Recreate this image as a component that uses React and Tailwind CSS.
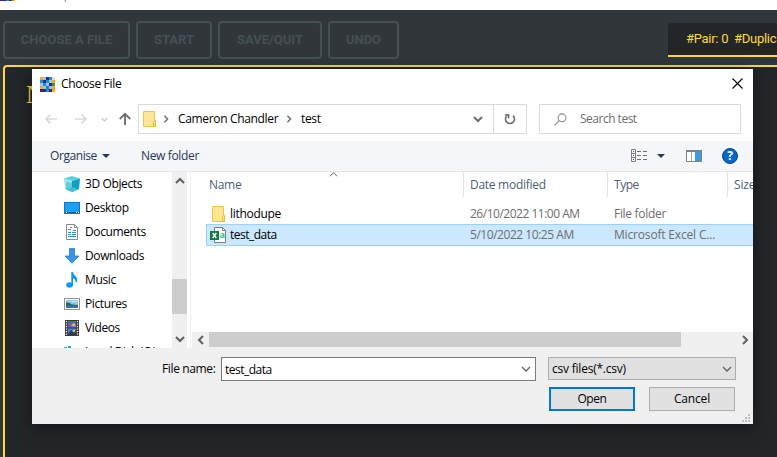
import React from "react";

const UI = "font-['Open_Sans','Noto_Sans',sans-serif]";

const LOGO = [
  "#ffa60a #9cc4e6 #2d2a7c #1d8fd6 #cfe0f0",
  "#1d8fd6 #2d2a7c #1d8fd6 #9cc4e6 #ffa60a",
  "#9cc4e6 #1d8fd6 #9cc4e6 #2d2a7c #1d8fd6",
  "#ffa60a #9cc4e6 #2d6fc0 #9cc4e6 #ffa60a",
  "#2d2a7c #2d2a7c #1d8fd6 #2d2a7c #ffa60a",
];

function Logo({ className }) {
  return (
    <svg className={className} viewBox="0 0 15 15" shapeRendering="crispEdges">
      {LOGO.map((row, y) =>
        row.split(" ").map((c, x) => (
          <rect key={`${x}-${y}`} x={x * 3} y={y * 3} width="3" height="3" fill={c} />
        ))
      )}
    </svg>
  );
}

function Chevron({ dir = "down", size = 10, color = "#606060", width = 1.5 }) {
  const d = { down: "M1 3L5 7L9 3", up: "M1 7L5 3L9 7", left: "M7 1L3 5L7 9", right: "M3 1L7 5L3 9" }[dir];
  return (
    <svg className="block shrink-0" width={size} height={size} viewBox="0 0 10 10" fill="none" stroke={color} strokeWidth={width * (10 / size)}>
      <path d={d} />
    </svg>
  );
}

function Arrow({ dir, color }) {
  const d = { left: "M13 7H2M6.5 2.5L2 7L6.5 11.5", right: "M1 7H12M7.5 2.5L12 7L7.5 11.5", up: "M7 13V2M1.8 7L7 1.8L12.2 7" }[dir];
  return (
    <svg className="block shrink-0" width="14" height="14" viewBox="0 0 14 14" fill="none" stroke={color} strokeWidth={dir === "up" ? 1.9 : 1.7}>
      <path d={d} />
    </svg>
  );
}

function Folder() {
  return (
    <svg className="block shrink-0" width="14" height="16" viewBox="0 0 14 16">
      <path d="M.5.5H11.5V9.5H12.5V15.5H.5Z" fill="#ffe694" stroke="#ecc44e" />
      <path d="M10.5 15V10.5L11.5 9.5H12.5V15.5H10.5Z" fill="#ffe27e" stroke="#e8bb3f" />
    </svg>
  );
}

function SideIcon({ name }) {
  const art = {
    objects: (
      <>
        <path d="M0 2.5L8 0L16 2.5L8 5Z" fill="#5ccfe0" />
        <path d="M0 2.5L8 5V16L1 13Z" fill="#9fe3ec" />
        <path d="M2 6L8 7V12L2 13.5Z" fill="#63cddc" />
        <path d="M8 5L16 2.5L15 13L8 16Z" fill="#0aa2c8" />
        <path d="M8 11L14 13L8 16L2 13.5Z" fill="#3cbfd1" />
      </>
    ),
    desktop: (
      <>
        <rect x=".5" y="2.5" width="15" height="11" fill="#1aa2f8" stroke="#0877c4" />
        <path d="M1 12.5H15" stroke="#0b62a4" />
        <path d="M2 12.5H3M12 12.5H13M14 12.5H15" stroke="#fff" />
      </>
    ),
    documents: (
      <>
        <path d="M2.5.5H10.5L13.5 3.5V15.5H2.5Z" fill="#fff" stroke="#8b8b8b" />
        <path d="M10.5.5V3.5H13.5" fill="none" stroke="#8b8b8b" />
        <path d="M4 5.5H7M6 3.5H8M9 6.5H12M4 8.5H7M8 8.5H12M4 10.5H7M8 10.5H12M4 12.5H12" stroke="#3d83c4" />
      </>
    ),
    downloads: <path d="M5.5.5H10.5V8H15L8 15.3L1 8H5.5Z" fill="#3a96e4" stroke="#2a7ac6" strokeWidth=".8" />,
    music: (
      <>
        <path d="M7.3 0H9C9 3 13.5 4.5 13.3 8C13.2 9.5 12.5 10.5 11.8 11.5C12 8.5 11 7 9 6.3V13H7.3Z" fill="#0a99f5" />
        <ellipse cx="5.6" cy="13" rx="3.4" ry="2.7" fill="#0a99f5" />
      </>
    ),
    pictures: (
      <>
        <rect x=".5" y="2.5" width="15" height="11" fill="#fff" stroke="#929292" />
        <rect x="2" y="4" width="12" height="8" fill="#8cc5ee" />
        <path d="M2 6.5Q5 6 8 8.5L14 9V10H2Z" fill="#2c6650" />
        <rect x="2" y="9.5" width="12" height="2.5" fill="#3671ab" />
        <path d="M7 5.5H13" stroke="#d9edfa" />
      </>
    ),
    videos: (
      <>
        <rect x="1" y="0" width="14" height="16" fill="#3b3b3b" />
        <path d="M2.5 1V16M13.5 1V16" stroke="#eee" strokeWidth="1.3" strokeDasharray="1.3 1.2" />
        <rect x="4" y="1" width="8" height="6.5" fill="#4269c6" />
        <rect x="4" y="8.5" width="8" height="6.5" fill="#4b7fd8" />
        <path d="M5 6L7 3L10 5.5Z" fill="#d6433a" />
        <path d="M7 6L10 2.5L12 6.5Z" fill="#e8c33a" />
        <path d="M4 14L7 10L9 12L12 10V15H4Z" fill="#303c58" />
        <circle cx="10" cy="11" r="1.3" fill="#e8c33a" />
      </>
    ),
    disk: <path d="M0 3H3V4H0ZM4 2H7V4H4ZM1 7H15V12H1Z" fill="#24b1d8" />,
  }[name];
  return <svg className="block shrink-0" width="16" height="16" viewBox="0 0 16 16">{art}</svg>;
}

function Excel() {
  return (
    <svg className="block shrink-0" width="16" height="16" viewBox="0 0 16 16">
      <path d="M4.5.5H12.5L15.5 3.5V15.5H4.5Z" fill="#fff" stroke="#7c7c7c" />
      <path d="M12.5.5V3.5H15.5" fill="none" stroke="#7c7c7c" />
      <rect x="0" y="4" width="9" height="9" fill="#107c41" />
      <path d="M2.7 6L6.3 11M6.3 6L2.7 11" stroke="#fff" strokeWidth="1.4" />
      <text x="9.4" y="11" fontSize="9" fontWeight="700" fontFamily="Open Sans" fill="#33c481">a</text>
    </svg>
  );
}

function Caret() {
  return (
    <svg className="block shrink-0" width="8" height="4" viewBox="0 0 8 4"><path d="M0 0H8L4 4Z" fill="#1e395b" /></svg>
  );
}

function ToolButton({ className, children }) {
  return (
    <div className={`flex h-[38px] items-center justify-center rounded border-2 border-[#455056] text-[#455056] text-[13px] font-bold ${className}`}>
      {children}
    </div>
  );
}

const SIDE = [
  ["objects", "3D Objects"],
  ["desktop", "Desktop"],
  ["documents", "Documents"],
  ["downloads", "Downloads"],
  ["music", "Music"],
  ["pictures", "Pictures"],
  ["videos", "Videos"],
  ["disk", "Local Disk (C:)"],
];

function Dialog() {
  return (
    <div className={`absolute left-8 top-[69px] flex h-[355px] w-[721px] flex-col overflow-hidden bg-white text-[12px] leading-4 text-black shadow-[0_4px_16px_rgba(0,0,0,0.45)] whitespace-nowrap ${UI}`}>
      <div className="flex h-[30px] shrink-0 items-center pl-2 pr-[10px]">
        <Logo className="h-[15px] w-[15px]" />
        <span className="ml-[6px] tracking-[-0.33px]">Choose File</span>
        <svg className="ml-auto mt-[-2px]" width="11" height="11" viewBox="0 0 11 11" stroke="#000" strokeWidth="1.1"><path d="M.5.5L10.5 10.5M10.5.5L.5 10.5" /></svg>
      </div>

      <div className="mt-[5px] flex h-[30px] shrink-0 items-center pl-3">
        <Arrow dir="left" color="#d9d9d9" />
        <div className="ml-4"><Arrow dir="right" color="#d9d9d9" /></div>
        <div className="ml-[13px]"><Chevron size={7} color="#d0d0d0" /></div>
        <div className="ml-[10px]"><Arrow dir="up" color="#707070" /></div>
        <div className="ml-[6px] flex h-[30px] w-[389px] items-center border border-[#d9d9d9] pl-1">
          <Folder />
          <div className="ml-[5px]"><Chevron dir="right" size={8} color="#707070" /></div>
          <span className="ml-2 w-[104px] tracking-[-0.34px]">Cameron Chandler</span>
          <div className="ml-[3px]"><Chevron dir="right" size={8} color="#707070" /></div>
          <span className="ml-2 tracking-[-0.35px]">test</span>
          <div className="ml-auto mr-[10px]"><Chevron size={10} color="#707070" width={2} /></div>
          <div className="flex h-full w-[33px] items-center justify-center border-l border-[#d9d9d9]">
            <svg width="12" height="12" viewBox="0 0 12 12" fill="none" stroke="#707070" strokeWidth="1.6"><path d="M9 2.7A4.5 4.5 0 1 1 3 2.7" /><path d="M1 1.8H4.6V5.4" /></svg>
          </div>
        </div>
        <div className="ml-3 flex h-[30px] w-[202px] items-center border border-[#d9d9d9] pl-[14px] text-[#6d6d6d]">
          <svg width="13" height="13" viewBox="0 0 13 13" fill="none" stroke="#8a8a8a" strokeWidth="1.1"><circle cx="8" cy="4.8" r="3.9" /><path d="M5.2 7.6L.5 12.4" /></svg>
          <span className="ml-[13px] tracking-[-0.5px]">Search test</span>
        </div>
      </div>

      <div className="mt-[7px] flex h-[31px] shrink-0 items-center border-b border-[#e5e7ea] bg-[#f5f6f7] pl-[18px] pr-[15px] text-[#1e395b]">
        <span className="w-[52px] tracking-[-0.42px]">Organise</span>
        <Caret />
        <span className="ml-[31px] tracking-[-0.35px]">New folder</span>
        <svg className="ml-auto" width="17" height="14" viewBox="0 0 17 14" fill="none" stroke="#808080"><path d="M.5.5H4.5V12.5H.5ZM.5 4.5H4.5M.5 8.5H4.5" /><path d="M6 2.5H10M12 2.5H16M6 6.5H10M12 6.5H16M6 10.5H10M12 10.5H16" stroke="#707070" /><path d="M2 2.5H3M2 6.5H3M2 10.5H3" stroke="#555" /></svg>
        <div className="ml-[9px]"><Caret /></div>
        <svg className="ml-[21px]" width="16" height="12" viewBox="0 0 16 12"><path d="M.5.5H15.5V11.5H.5Z" fill="#fff" stroke="#7d8287" /><path d="M0 1H16" stroke="#7d8287" strokeWidth="2" /><path d="M5.5 2V11" stroke="#a9a9a9" /><rect x="9" y="2" width="6" height="9" fill="#3c9be8" /></svg>
        <svg className="ml-5" width="16" height="16" viewBox="0 0 16 16"><circle cx="8" cy="8" r="7.5" fill="#0567c6" stroke="#05488f" /><text x="8" y="12.4" textAnchor="middle" fontSize="12" fontWeight="700" fontFamily="Open Sans" fill="#fff">?</text></svg>
      </div>

      <div className="flex h-[176px] shrink-0">
        <div className="h-full w-[140px] overflow-hidden pl-8">
          {SIDE.map(([icon, label]) => (
            <div key={icon} className="flex h-6 items-center gap-[5px] tracking-[-0.38px]">
              <SideIcon name={icon} />
              <span>{label}</span>
            </div>
          ))}
        </div>
        <div className="flex h-full w-[15px] flex-col items-center bg-[#f0f0f0]">
          <div className="mt-1"><Chevron dir="up" size={10} width={2} /></div>
          <div className="mt-[93px] h-[35px] w-full bg-[#cdcdcd]" />
          <div className="mb-1 mt-auto"><Chevron size={10} width={2} /></div>
        </div>
        <div className="ml-[3px] flex min-w-0 flex-1 flex-col border-l border-[#f0f0f0]">
          <div className="relative flex h-[25px] items-center text-[#4c607a]">
            <span className="w-[272px] shrink-0 pl-[18px] tracking-[-0.3px]">Name</span>
            <div className="flex h-full w-36 shrink-0 items-center border-l border-[#e5e5e5] pl-[6px] tracking-[-0.28px]">Date modified</div>
            <div className="flex h-full w-[120px] shrink-0 items-center border-l border-[#e5e5e5] pl-[6px] tracking-[-0.45px]">Type</div>
            <div className="flex h-full shrink-0 items-center border-l border-[#e5e5e5] pl-[6px] tracking-[-0.17px]">Size</div>
            <div className="absolute left-[138px] top-[-2px]"><Chevron dir="up" size={9} width={1} /></div>
          </div>
          <div className="ml-[15px] mt-[6px] flex h-[21px] items-center pl-[6px] text-[#6d6d6d]">
            <Folder />
            <span className="ml-1 w-60 text-black tracking-[-0.3px]">lithodupe</span>
            <span className="w-36 tracking-[-0.49px]">26/10/2022 11:00 AM</span>
            <span className="tracking-[-0.3px]">File folder</span>
          </div>
          <div className="ml-[15px] flex h-[22px] items-center border border-r-0 border-[#99d1ff] bg-[#cce8ff] pl-[3px] text-[#6d6d6d]">
            <Excel />
            <span className="ml-1 w-60 text-black tracking-[-0.5px]">test_data</span>
            <span className="w-36 tracking-[-0.46px]">5/10/2022 10:25 AM</span>
            <span className="tracking-[-0.17px]">Microsoft Excel C...</span>
          </div>
          <div className="ml-px mt-auto flex h-4 items-start bg-[#f0f0f0]">
            <div className="flex h-[15px] w-[17px] items-center justify-center"><Chevron dir="left" size={10} width={2} /></div>
            <div className="h-[15px] w-[472px] bg-[#cdcdcd]" />
            <div className="ml-auto mr-[3px] flex h-[15px] items-center"><Chevron dir="right" size={10} width={2} /></div>
          </div>
        </div>
      </div>

      <div className="flex flex-1 flex-col bg-[#f0f0f0]">
        <div className="mt-[9px] flex h-6 items-start">
          <span className="w-[189px] pl-[130px] pt-1 tracking-[-0.36px]">File name:</span>
          <div className="flex h-6 w-[315px] items-center justify-between border border-[#7a7a7a] bg-white pl-[3px] pr-1">
            <span className="pt-0.5 tracking-[-0.5px]">test_data</span>
            <Chevron size={10} width={1.3} />
          </div>
          <div className="ml-3 flex h-[23px] w-[188px] items-center justify-between border border-[#adadad] bg-[#e1e1e1] pl-[3px] pr-[3px]">
            <span className="tracking-[-0.22px]">csv files(*.csv)</span>
            <Chevron size={10} width={1.3} />
          </div>
        </div>
        <div className="mt-[6px] flex">
          <div className="ml-[517px] flex h-6 w-[86px] items-center justify-center border-2 border-[#0078d7] bg-[#e1e1e1] tracking-[-0.4px]">Open</div>
          <div className="ml-[14px] flex h-6 w-[86px] items-center justify-center border border-[#adadad] bg-[#e1e1e1] tracking-[-0.17px]">Cancel</div>
        </div>
        <svg className="ml-auto mr-[3px] mt-[3px]" width="8" height="8" viewBox="0 0 8 8" fill="#bfbfbf"><path d="M6 0h2v2h-2zM3 3h2v2h-2zM6 3h2v2h-2zM0 6h2v2h-2zM3 6h2v2h-2zM6 6h2v2h-2z" /></svg>
      </div>
    </div>
  );
}

export default function App() {
  return (
    <div className="relative flex h-[457px] w-[777px] flex-col overflow-hidden bg-[#31363b] font-[Roboto,sans-serif]">
      <div className={`relative h-[10px] shrink-0 overflow-hidden bg-white text-[12px] text-[#888] ${UI}`}>
        <Logo className="absolute left-0 top-[-14px] h-[15px] w-[15px]" />
        <span className="absolute left-[21px] top-[-13px] leading-4">Lithodupe</span>
      </div>
      <div className="flex h-[55px] shrink-0 items-start gap-[6px] pl-[3px] pt-[11px]">
        <ToolButton className="w-[127px]">CHOOSE A FILE</ToolButton>
        <ToolButton className="w-[76px]">START</ToolButton>
        <ToolButton className="w-[104px]">SAVE/QUIT</ToolButton>
        <ToolButton className="w-[71px]">UNDO</ToolButton>
        <div className="ml-auto mt-[2px] flex h-[34px] w-[109px] items-center overflow-hidden whitespace-pre rounded-t border-b-2 border-[#ffd740] bg-[#232629] pl-[18px] text-[13px] tracking-[-0.28px] text-[#ffd740]">
          #Pair: 0  #Duplicates: 0
        </div>
      </div>
      <div className="ml-[3px] flex-1 rounded-tl border-l-2 border-t-2 border-[#ffd740] bg-[#232629] pl-[21px] pt-[9px] font-['Liberation_Serif',serif] text-[25px] text-[#ffd740]">
        N
      </div>
      <Dialog />
    </div>
  );
}
